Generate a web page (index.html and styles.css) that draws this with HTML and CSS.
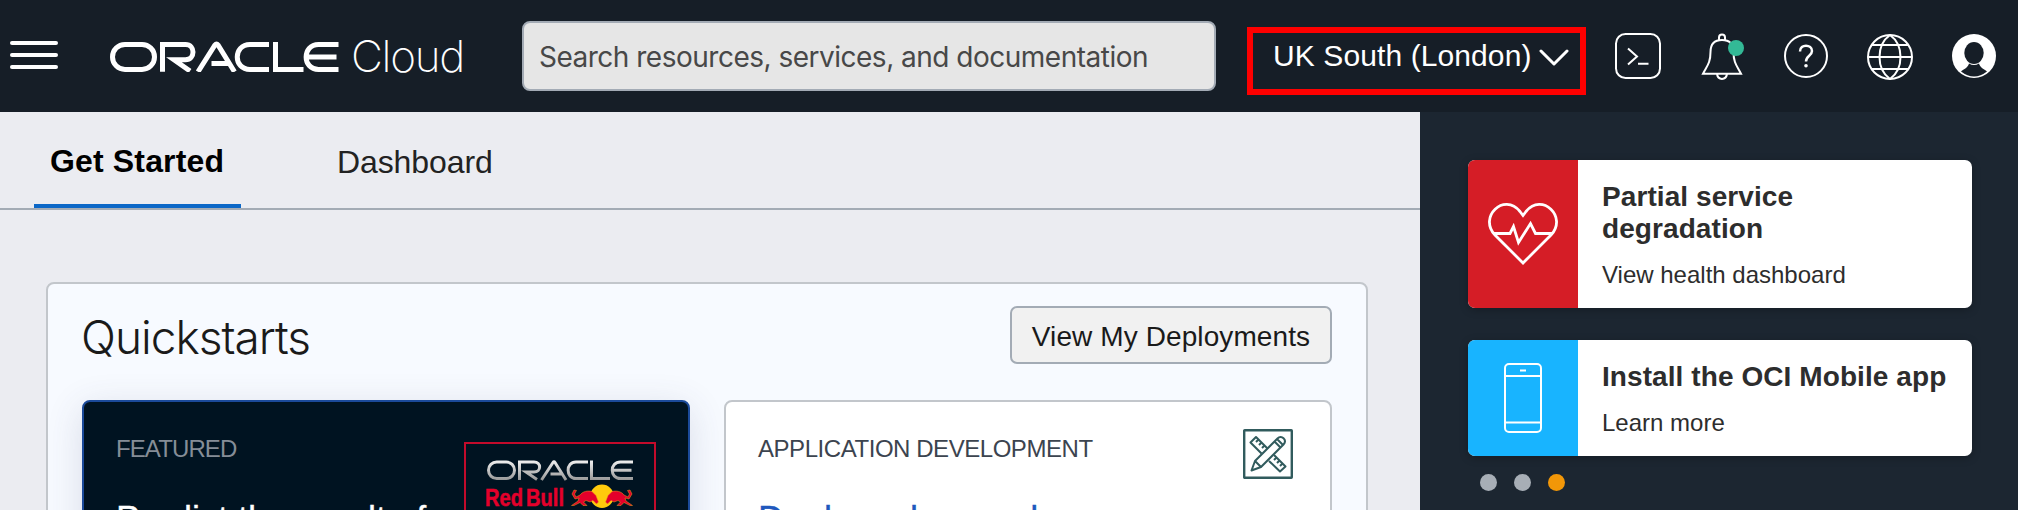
FILE: index.html
```html
<!DOCTYPE html>
<html lang="en">
<head>
<meta charset="utf-8">
<title>Oracle Cloud Console</title>
<link rel="stylesheet" href="styles.css">
</head>
<body>
<header class="topbar">
  <button class="menu" aria-label="Menu"><span></span><span></span><span></span></button>
  <div class="brand">
    <svg class="oracle-mark" width="230" height="31" viewBox="0 0 230 31" fill="none" stroke="#fff" stroke-width="5">
      <rect x="2.5" y="3.4" width="42" height="25" rx="12.5"/>
      <path d="M52.5 30.800V3.400H75.500C85.500 3.400 85.500 18.800 75.500 18.800H64L80 30"/>
      <path d="M88 30.800 105 4Q106.500 2 108 4L124.500 30.800M101.500 22.500H119"/>
      <path d="M159 3.400H140C123 3.400 123 28.400 140 28.400H159"/>
      <path d="M165.500 .9V28.400H193.500"/>
      <path d="M228.500 3.400H208.500C192 3.400 192 28.400 208.500 28.400H228.500M196 16H226.500"/>
    </svg>
    <span class="brand-cloud">Cloud</span>
  </div>
  <div class="search"><span class="search-text">Search resources, services, and documentation</span></div>
  <div class="region">
    <span class="region-text">UK South (London)</span>
    <svg width="30" height="20" viewBox="0 0 30 20" fill="none" stroke="#fff" stroke-width="3" stroke-linecap="round" stroke-linejoin="round"><path d="M2 3 15 16 28 3"/></svg>
  </div>
  <nav class="tools">
    <svg width="48" height="48" viewBox="0 0 48 48" fill="none" stroke="#fff" stroke-width="2"><rect x="2" y="2" width="44" height="44" rx="9.500"/><path d="M14 16.500 23 24.500 14 32.500M24 31.800H34.500"/></svg>
    <svg width="48" height="48" viewBox="0 0 48 48" fill="none" stroke="#fff" stroke-width="2"><path d="M21 8V5.500a3 3 0 0 1 6 0V8M24 8C16 8 12.500 13 12.500 20C12.500 31 9 34 5 41.700H43C39 34 35.500 31 35.500 20C35.500 13 32 8 24 8ZM19 42C20 48.500 28 48.500 29 42"/><circle cx="38" cy="16" r="8" fill="#33b996" stroke="none"/></svg>
    <svg width="48" height="48" viewBox="0 0 48 48" fill="none" stroke="#fff" stroke-width="2"><circle cx="24" cy="24" r="21"/><path stroke-width="2.500" d="M18 19.500C18 11.500 30 12 30 19C30 24 24 23.500 24 29.500"/><circle cx="24" cy="33.800" r="1.800" fill="#fff" stroke="none"/></svg>
    <svg width="48" height="48" viewBox="0 0 48 48" fill="none" stroke="#fff" stroke-width="2"><circle cx="24" cy="25" r="22"/><path d="M24 3C10 13 10 37 24 47C38 37 38 13 24 3M5.500 13H42.500M2 25H46M5.500 37H42.500"/></svg>
    <svg width="48" height="48" viewBox="0 0 48 48"><circle cx="24" cy="24" r="22" fill="#fff"/><ellipse cx="24" cy="21" rx="9.700" ry="11" fill="#161e27"/><path d="M11 39.500C13 37.500 18 36 19 31.500Q24 34.500 29 31.500C30 36 35 37.500 37 39.500Q24 49.500 11 39.500Z" fill="#161e27"/></svg>
  </nav>
</header>
<div class="page">
  <main class="content">
    <nav class="tabs">
      <a class="tab active">Get Started</a>
      <a class="tab">Dashboard</a>
    </nav>
    <section class="quick">
      <div class="quick-head">
        <h1>Quickstarts</h1>
        <button class="deploy"><span>View My Deployments</span></button>
      </div>
      <div class="cards">
        <article class="card featured">
          <div class="copy">
            <p class="label">FEATURED</p>
            <h2>Predict the result of</h2>
          </div>
          <svg class="sponsor" width="192" height="70" viewBox="0 0 192 70">
            <defs><linearGradient id="silver" x1="0" y1="19" x2="0" y2="38" gradientUnits="userSpaceOnUse"><stop offset="0" stop-color="#eee"/><stop offset="1" stop-color="#999"/></linearGradient></defs>
            <rect x="1" y="1" width="190" height="90" fill="none" stroke="#c30b2b" stroke-width="2"/>
            <g fill="none" stroke="url(#silver)" stroke-width="3">
              <rect x="24.500" y="20" width="26" height="16.500" rx="8.200"/>
              <path d="M55.500 38V20H70C77.500 20 77.500 30 70 30H62L73 37.500"/>
              <path d="M77.500 38 89 20.500Q90 19 91 20.500L102 38M86.500 32H98"/>
              <path d="M124 20H112C101.500 20 101.500 36.500 112 36.500H124"/>
              <path d="M127.500 18.500V36.500H146"/>
              <path d="M169 20H156.500C145.500 20 145.500 36.500 156.500 36.500H169M148 28.200H167.500"/>
            </g>
            <text class="redbull" x="21" y="63.500" textLength="79" lengthAdjust="spacingAndGlyphs">Red Bull</text>
            <circle cx="138" cy="54.300" r="11.700" fill="#ffcb0c"/>
            <g fill="#e4002b" stroke="#f2a01d" stroke-width=".5">
              <path d="M110 48L112.500 48.500 110.500 52 112 55 116 53C119 49 124 48.500 128 49.500L132 53.500 134.500 60 132.500 62 129 58.500 126 60 122 58.500 119.500 60 123 63.500H119L116 60.500 110 63.500H107.500L114 59 115 56 111 57 108 52Z"/>
              <path d="M166 48L163.500 48.500 165.500 52 164 55 160 53C157 49 152 48.500 148 49.500L144 53.500 141.500 60 143.500 62 147 58.500 150 60 154 58.500 156.500 60 153 63.500H157L160 60.500 166 63.500H168.500L162 59 161 56 165 57 168 52Z"/>
            </g>
          </svg>
        </article>
        <article class="card">
          <div class="copy">
            <p class="label app">APPLICATION DEVELOPMENT</p>
            <h2>Deploy a <span class="wide">low-code</span></h2>
          </div>
          <svg class="tools-icon" width="50" height="50" viewBox="0 0 50 50" fill="none" stroke="#315b5d" stroke-width="2" stroke-linejoin="round">
            <rect x="1.200" y="1.200" width="47.600" height="47.600" rx=".5" stroke-width="2.400"/>
            <path d="M18.500 24.500 7.500 13.500 13 8 24.500 19.500M15.500 10.500 13 13M18.500 13.500 16 16M21.500 16.500 19 19M31 26 42.500 37.500 37 42.500 26 32M33.500 28.500 31 31M36.500 31.500 34 34M39.500 34.500 37 37"/>
            <path d="M8.500 41.500 12 32 34.500 9.500C38.500 5.500 44.500 11 40.500 15.500L18 38ZM12 32 18 38M31.500 12.500 37.500 18.500M34 10 40 16"/>
          </svg>
        </article>
      </div>
    </section>
  </main>
  <aside class="side">
    <article class="notice">
      <div class="notice-icon red">
        <svg width="74" height="64" viewBox="0 0 74 64" fill="none" stroke="#fff" stroke-width="2.800"><path d="M37 61 9 33C-8 15 18-10 34 9.500L37 13.500 40 9.500C56-10 82 15 65 33ZM7 31.500H24L27.500 24.500 32.500 40.500 44.500 21.500 49.500 31.500H67"/></svg>
      </div>
      <div class="notice-copy"><h3>Partial service<br>degradation</h3><p>View health dashboard</p></div>
    </article>
    <article class="notice">
      <div class="notice-icon blue">
        <svg width="38" height="70" viewBox="0 0 38 70" fill="none" stroke="#fff" stroke-width="2"><rect x="1" y="1" width="36" height="68" rx="4"/><path d="M1 13H37M1 59.500H37M16 7.500H22"/></svg>
      </div>
      <div class="notice-copy"><h3>Install the OCI Mobile app</h3><p>Learn more</p></div>
    </article>
    <div class="dots"><span></span><span></span><span class="on"></span></div>
  </aside>
</div>
</body>
</html>
```
FILE: styles.css
```css
* { box-sizing: border-box; }
body { margin: 0; width: 2018px; height: 510px; overflow: hidden; font-family: "Liberation Sans", Arial, sans-serif; background: #ebecf1; color: #1a1a1a; }
h1, h2, h3, p { margin: 0; }
button { font: inherit; }
.topbar { height: 112px; background: #161e27; display: flex; align-items: flex-start; color: #fff; }
.menu { margin: 41px 0 0 10px; padding: 0; width: 48px; border: 0; background: none; display: flex; flex-direction: column; gap: 8px; }
.menu span { height: 4px; border-radius: 2px; background: #fff; }
.brand { display: flex; width: 464px; padding: 41px 0 0 52px; }
.oracle-mark { flex: none; }
.brand-cloud { margin: -11px 0 0 11px; font: 200 44px/52px Inter, sans-serif; letter-spacing: -1.3px; white-space: nowrap; }
.search { margin-top: 21px; width: 694px; height: 70px; border: 2px solid #a3abb5; border-radius: 8px; background: #e6e6e6; padding: 0 0 0 15px; }
.search-text { display: block; width: 611px; overflow: hidden; white-space: nowrap; font: 28px/69px Inter, sans-serif; color: #484848; letter-spacing: -.5px; }
.region { margin: 27px 0 0 31px; width: 339px; height: 68px; border: 6px solid #f00; padding: 6px 0 0 20px; display: flex; gap: 10px; }
.region-text { font-size: 30px; line-height: 34px; white-space: nowrap; width: 256px; letter-spacing: .1px; }
.region svg { margin-top: 9px; }
.tools { display: flex; gap: 36px; margin: 32px 0 0 28px; }
.page { display: flex; height: 398px; }
.content { width: 1420px; height: 398px; overflow: hidden; flex: none; }
.tabs { height: 98px; border-bottom: 2px solid #a3abb5; display: flex; gap: 80px; padding-left: 34px; }
.tab { font-size: 32px; line-height: 36px; padding: 32px 16px 0; color: #222; height: 96px; white-space: nowrap; letter-spacing: -.1px; }
.tab.active { width: 207px; font-weight: 700; color: #000; border-bottom: 4px solid #0b67c7; padding-top: 31px; letter-spacing: .15px; }
.quick { margin: 72px 0 0 46px; height: 300px; width: 1322px; border: 2px solid #c2c6cb; border-radius: 8px; background: #f7faff; padding: 22px 34px 0; }
.quick-head { display: flex; justify-content: space-between; height: 94px; }
h1 { font: 300 46px/62px Inter, sans-serif; letter-spacing: -1px; margin-left: -1px; }
.deploy { width: 322px; height: 58px; border: 2px solid #a3abb5; border-radius: 7px; background: #f1f1f1; color: #1a1a1a; font-size: 28px; white-space: nowrap; padding: 3px 0 0; letter-spacing: .1px; }
.cards { display: grid; grid-template-columns: 608px 608px; gap: 34px; }
.card { height: 240px; border: 2px solid #c2c6cb; border-radius: 8px; background: #fff; padding: 25px 37px 0 32px; display: flex; justify-content: space-between; }
.label { font-size: 24px; line-height: 28px; margin-top: 8px; color: #3c444f; white-space: nowrap; letter-spacing: -.9px; }
.label.app { letter-spacing: -.45px; }
.card h2 { font-size: 36px; line-height: 40px; font-weight: 400; margin-top: 37px; color: #2058bd; white-space: nowrap; -webkit-text-stroke: .3px; }
.wide { letter-spacing: .7px; }
.tools-icon { margin-top: 2px; }
.featured { background: #001321; border-color: #1b4a9a; box-shadow: 0 8px 36px rgba(60, 70, 110, .16); padding-right: 32px; }
.featured .label { color: #858d97; }
.featured h2 { color: #fff; }
.sponsor { margin-top: 15px; flex: none; }
.redbull { font: 700 24px "Liberation Sans", sans-serif; fill: #e4002b; stroke: #e4002b; stroke-width: .5px; word-spacing: -3px; }
.side { width: 598px; background: #1c2631; padding: 48px 46px 0 48px; }
.notice { display: flex; width: 504px; height: 148px; background: #fff; border-radius: 7px; overflow: hidden; margin-bottom: 32px; box-shadow: 0 2px 8px rgba(0,0,0,.25); color: #2d2d2d; }
.notice + .notice { height: 116px; margin-bottom: 18px; }
.notice-icon { width: 110px; flex: none; display: flex; align-items: center; justify-content: center; }
.red { background: #d51d26; }
.blue { background: #18b4ff; }
.notice-copy { padding: 21px 0 0 24px; white-space: nowrap; }
h3 { font-size: 28px; line-height: 32px; letter-spacing: .08px; }
.notice p { font-size: 24px; line-height: 28px; margin-top: 16px; letter-spacing: 0; }
.dots { display: flex; gap: 17px; margin-left: 12px; }
.dots span { width: 17px; height: 17px; border-radius: 50%; background: #a7aeb6; }
.dots .on { background: #f29708; }
```
